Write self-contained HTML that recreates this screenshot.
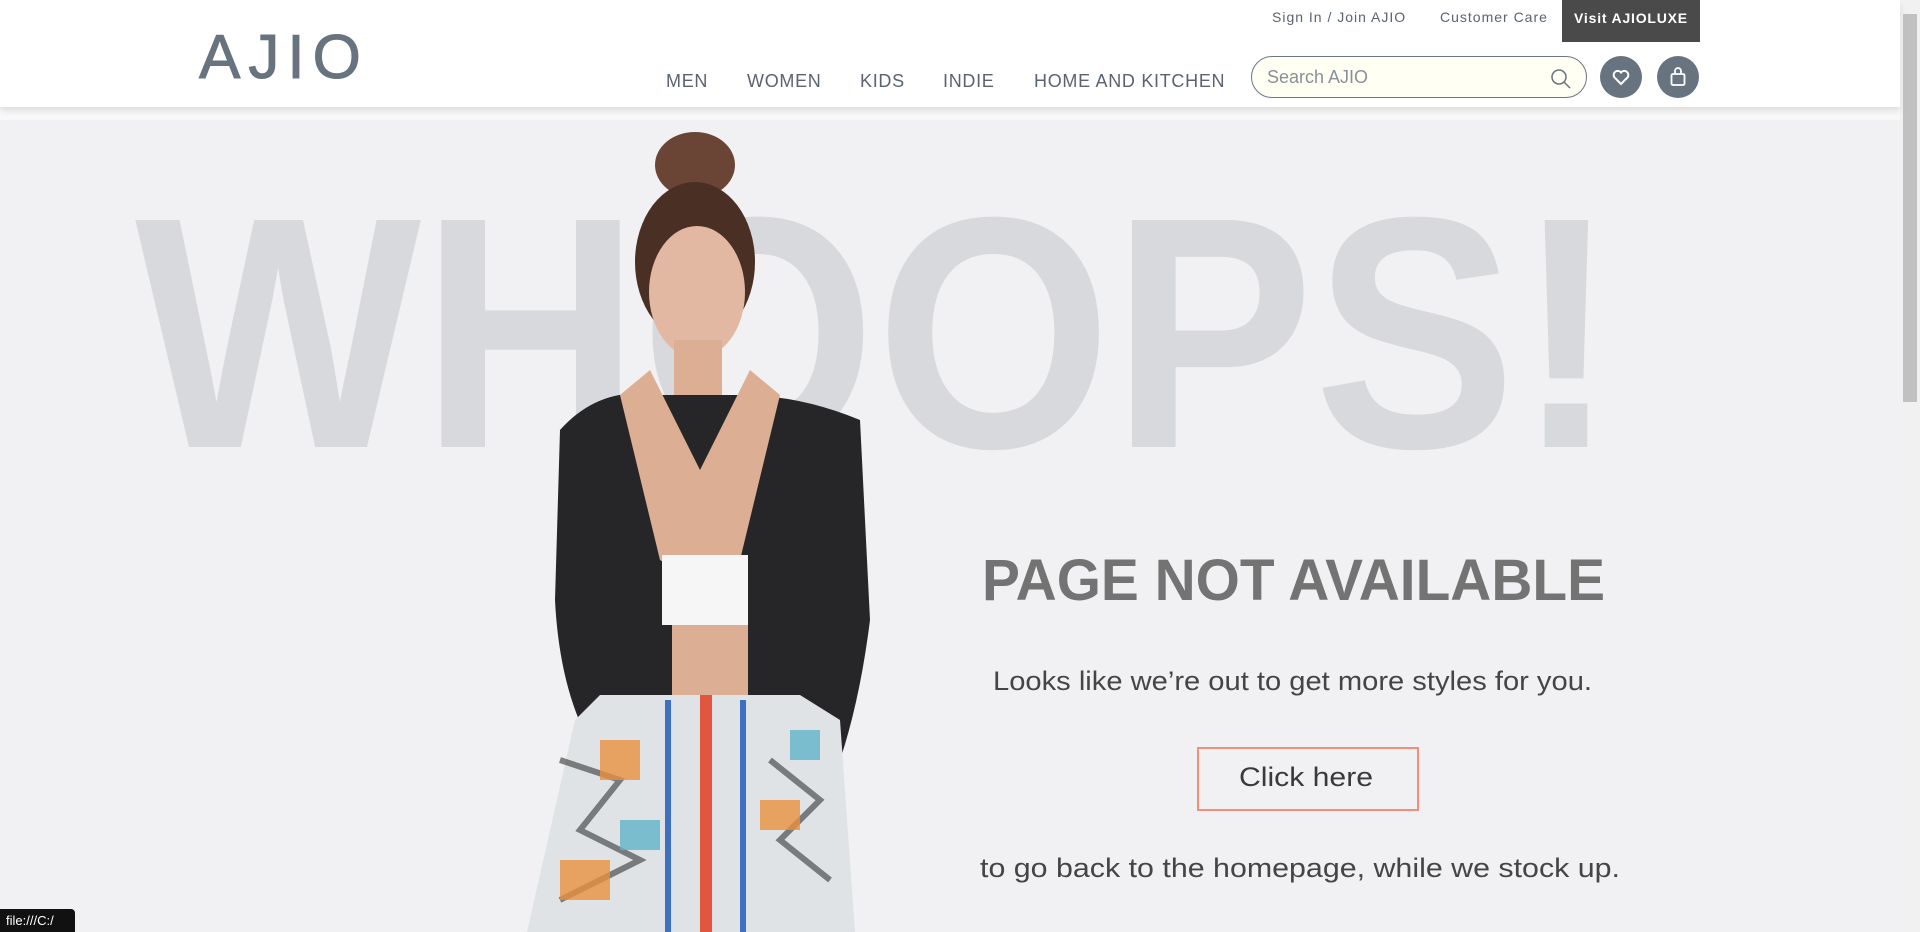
<!DOCTYPE html>
<html><head><meta charset="utf-8"><style>
*{margin:0;padding:0;box-sizing:border-box}
body{width:1920px;height:932px;overflow:hidden;background:#f1f1f3;font-family:"Liberation Sans",sans-serif;position:relative}
.hdr{position:absolute;left:0;top:0;width:1900px;height:107px;background:#fff;box-shadow:0 4px 6px rgba(0,0,0,.10);z-index:5}
.band{position:absolute;left:0;top:107px;width:1900px;height:13px;background:#f8f8f9}
.logo{position:absolute;left:199px;top:22px;font-size:62px;color:#67737f;letter-spacing:8px;font-weight:400;-webkit-text-stroke:1px #67737f}
.tl{position:absolute;top:9px;font-size:14px;color:#5a6470;letter-spacing:1px}
.lux{position:absolute;left:1562px;top:0;width:138px;height:42px;background:#4a4a4a;color:#fff;font-size:14px;font-weight:bold;letter-spacing:.8px;text-align:center;line-height:36px}
.nav{position:absolute;top:71px;font-size:18px;color:#5a6470;letter-spacing:.7px}
.search{position:absolute;left:1251px;top:56px;width:336px;height:42px;border:1px solid #6b7785;border-radius:21px;background:#fffff3;}
.search span{position:absolute;left:15px;top:10px;font-size:18px;color:#8a9099}
.circ{position:absolute;top:56px;width:42px;height:42px;border-radius:50%;background:#67737f}
.sb{position:absolute;right:0;top:0;width:20px;height:932px;background:#f1f1f1}
.sb div{position:absolute;left:3px;top:14px;width:14px;height:388px;background:#c1c1c1}
.status{position:absolute;left:0;top:909px;width:75px;height:23px;background:#111;color:#fff;font-size:13px;line-height:23px;padding-left:6px;border-radius:0 4px 0 0}
</style></head><body>
<div class="hdr">
  <div class="logo">AJIO</div>
  <div class="tl" style="left:1272px">Sign In / Join AJIO</div>
  <div class="tl" style="left:1440px">Customer Care</div>
  <div class="lux">Visit AJIOLUXE</div>
  <div class="nav" style="left:666px">MEN</div>
  <div class="nav" style="left:747px">WOMEN</div>
  <div class="nav" style="left:860px">KIDS</div>
  <div class="nav" style="left:943px">INDIE</div>
  <div class="nav" style="left:1034px">HOME AND KITCHEN</div>
  <div class="search"><span>Search AJIO</span>
    <svg style="position:absolute;left:298px;top:11px" width="22" height="22" viewBox="0 0 22 22"><circle cx="9" cy="9" r="7" fill="none" stroke="#67737f" stroke-width="1.5"/><path d="M14 14l6 6" stroke="#67737f" stroke-width="1.5"/></svg>
  </div>
  <div class="circ" style="left:1600px"><svg width="42" height="42" viewBox="0 0 42 42"><path d="M21 28l-6.5-6.5a4 4 0 0 1 6.5-5 4 4 0 0 1 6.5 5z" fill="none" stroke="#fff" stroke-width="2"/></svg></div>
  <div class="circ" style="left:1657px"><svg width="42" height="42" viewBox="0 0 42 42"><rect x="14.5" y="18" width="13" height="11" rx="1.5" fill="none" stroke="#fff" stroke-width="1.8"/><path d="M18 18v-3a3 3 0 0 1 6 0v3" fill="none" stroke="#fff" stroke-width="1.8"/></svg></div>
</div>
<div class="band"></div>
<svg style="position:absolute;left:0;top:120px" width="1900" height="812" viewBox="0 120 1900 812">
  <rect x="0" y="120" width="1900" height="812" fill="#f1f1f3"/>
  <text x="135" y="447" font-family="Liberation Sans" font-weight="bold" font-size="330" fill="#d8d9dc" textLength="1482" lengthAdjust="spacingAndGlyphs">WHOOPS!</text>
  <!-- woman approximation -->
  <ellipse cx="695" cy="165" rx="40" ry="33" fill="#6a4535"/>
  <ellipse cx="695" cy="262" rx="60" ry="80" fill="#4a2f24"/>
  <ellipse cx="697" cy="292" rx="48" ry="66" fill="#e2b8a2"/>
  <rect x="674" y="340" width="48" height="70" fill="#dcae94"/>
  <path d="M560 430 Q600 385 660 395 L740 395 Q800 395 860 420 L870 620 Q860 700 840 760 L600 760 Q560 700 555 600 Z" fill="#262628"/>
  <path d="M650 370 L700 470 L750 370 L780 395 L740 560 L700 585 L660 560 L620 395Z" fill="#dcae94"/>
  <rect x="662" y="555" width="86" height="70" fill="#f6f6f6"/>
  <rect x="672" y="625" width="76" height="70" fill="#dcae94"/>
  <path d="M575 720 L600 695 L800 695 L840 720 L855 932 L527 932 Z" fill="#dfe3e6"/>
  <path d="M560 760 L620 780 L580 830 L640 860 L560 900 M770 760 L820 800 L780 840 L830 880" stroke="#333" stroke-width="6" fill="none" opacity=".6"/>
  <path d="M600 740 h40 v40 h-40z M760 800 h40 v30 h-40z M560 860 h50 v40 h-50z" fill="#e8903e" opacity=".8"/>
  <path d="M620 820 h40 v30 h-40z M790 730 h30 v30 h-30z" fill="#5fb3c9" opacity=".8"/>
  <rect x="700" y="695" width="12" height="237" fill="#e2553f"/>
  <rect x="665" y="700" width="6" height="232" fill="#3d6fc2"/>
  <rect x="740" y="700" width="6" height="232" fill="#3d6fc2"/>
  <text x="982" y="600" font-family="Liberation Sans" font-weight="bold" font-size="58" fill="#737373" textLength="623" lengthAdjust="spacingAndGlyphs">PAGE NOT AVAILABLE</text>
  <text x="993" y="690" font-family="Liberation Sans" font-size="27" fill="#454545" textLength="599" lengthAdjust="spacingAndGlyphs">Looks like we’re out to get more styles for you.</text>
  <rect x="1198" y="748" width="220" height="62" fill="none" stroke="#f0907a" stroke-width="2"/>
  <text x="1239" y="786" font-family="Liberation Sans" font-size="27" fill="#3a3a3a" textLength="134" lengthAdjust="spacingAndGlyphs">Click here</text>
  <text x="980" y="877" font-family="Liberation Sans" font-size="27" fill="#454545" textLength="640" lengthAdjust="spacingAndGlyphs">to go back to the homepage, while we stock up.</text>
</svg>
<div class="sb"><div></div></div>
<div class="status">file:///C:/</div>
</body></html>
